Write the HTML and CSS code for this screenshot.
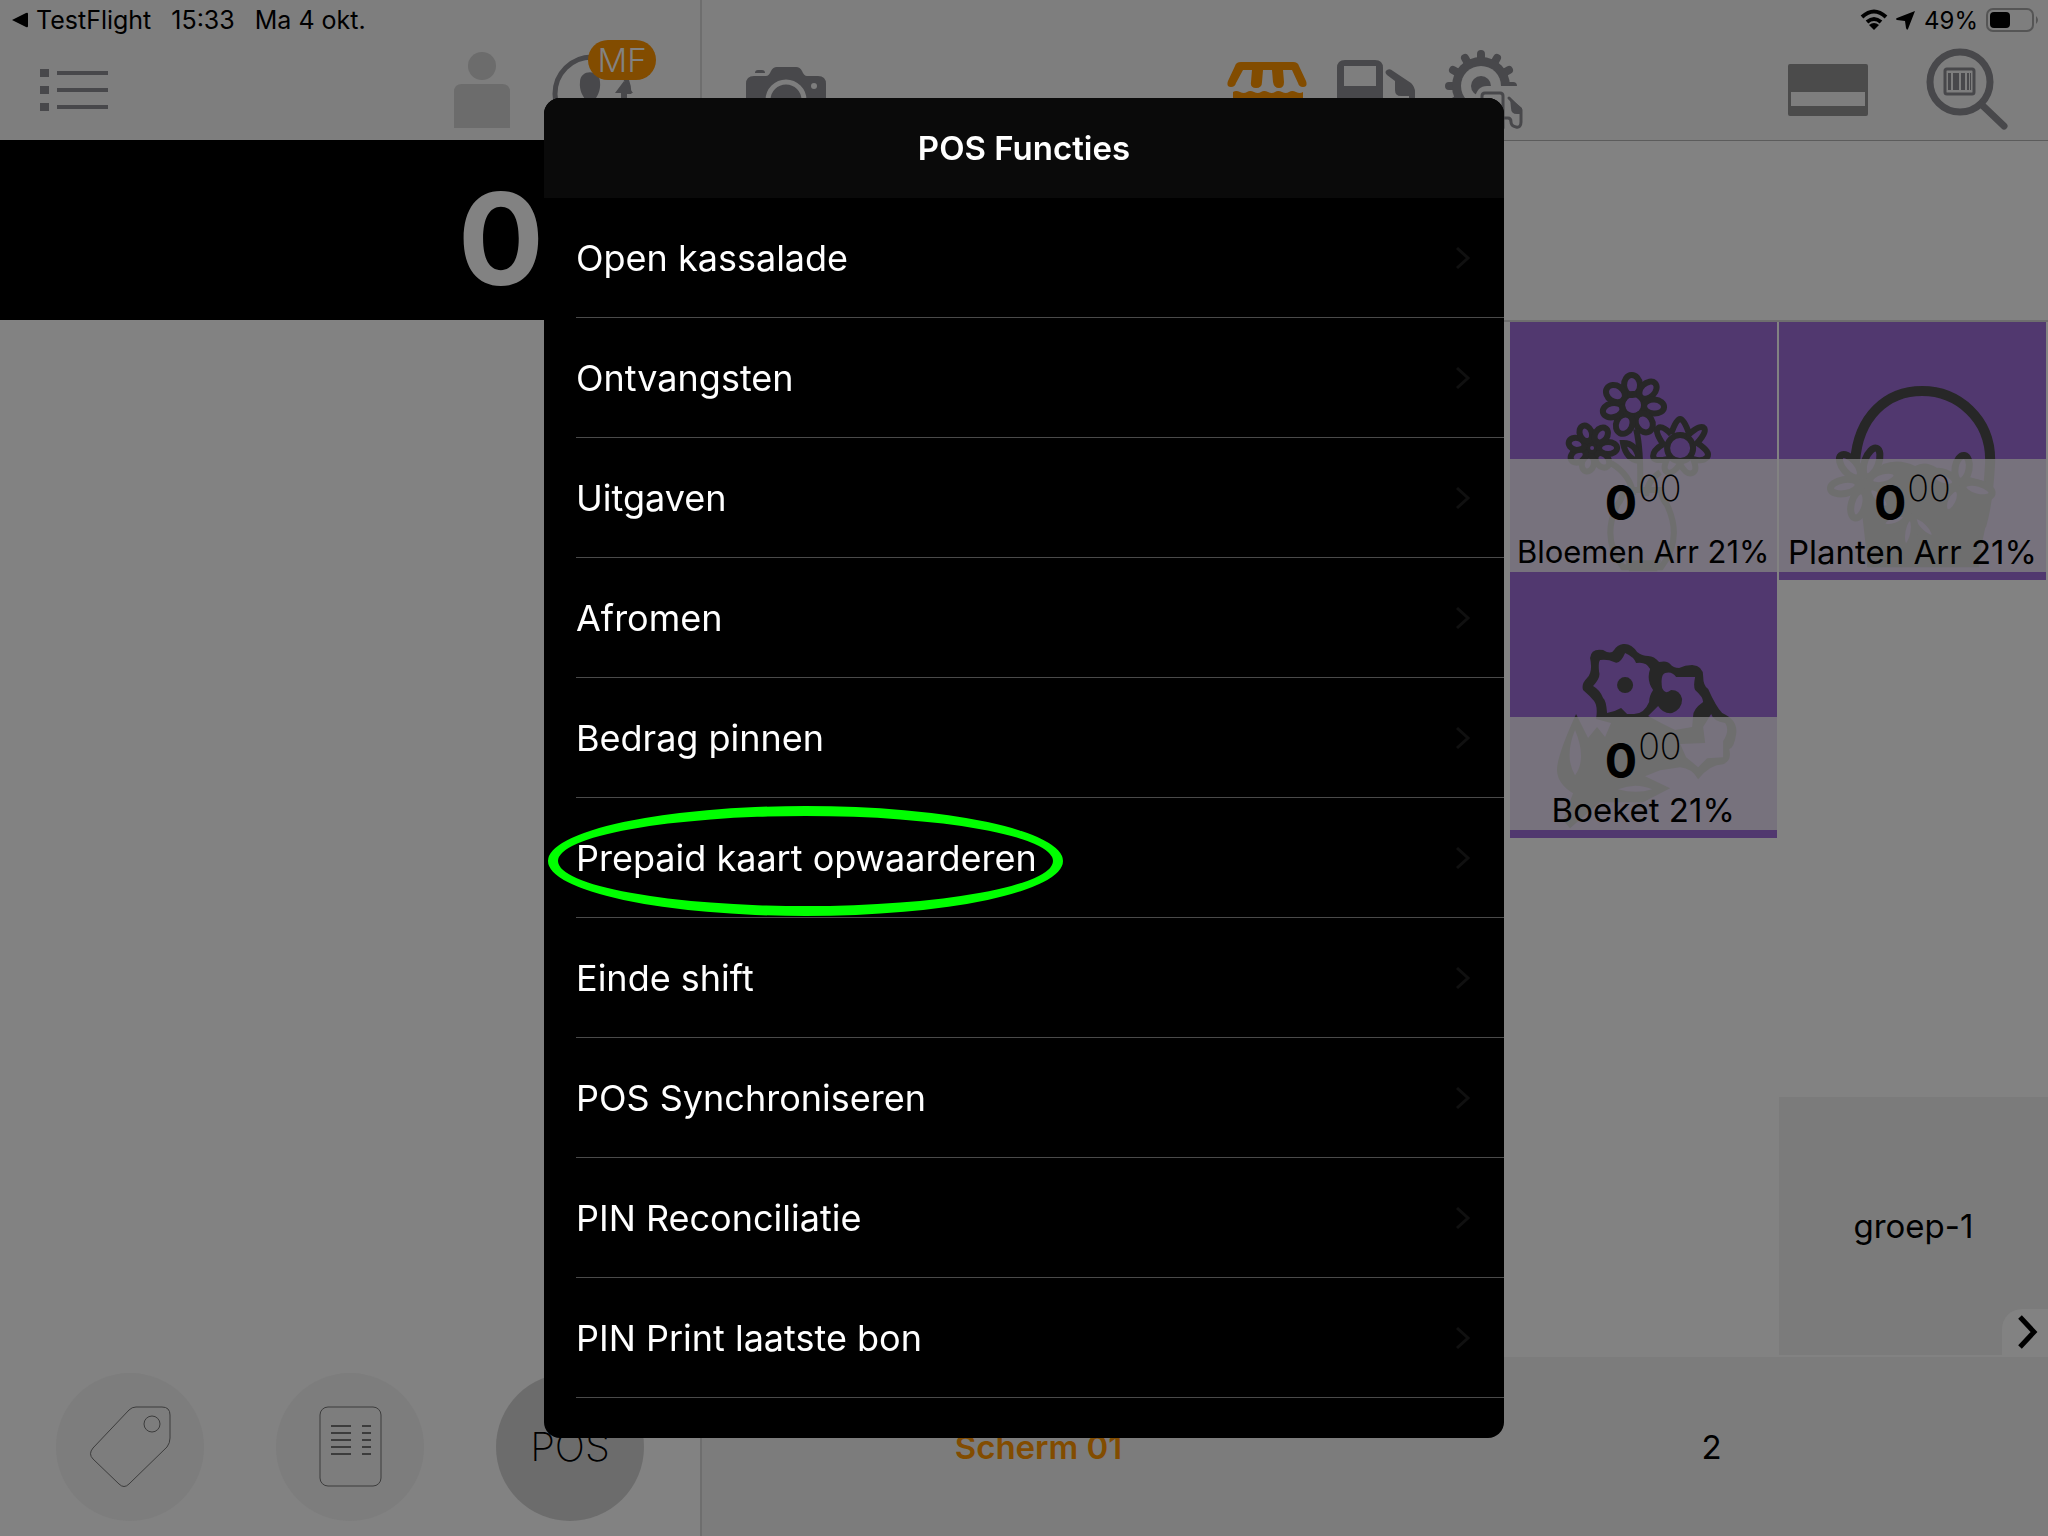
FILE: index.html
```html
<!DOCTYPE html>
<html lang="nl">

<head>
    <meta charset="UTF-8">
    <meta name="viewport" content="width=device-width, initial-scale=1.0">
    <title>POS Functies</title>

    <link rel="stylesheet" href="styles.css">
</head>

<body>

    <div class="app">

        <!-- Bon -->
        <section class="receipt">
            <header class="topbar">
                <div class="status">
                    <a class="back" href="#">
                        <svg width="16" height="16" viewBox="0 0 16 16"><path d="M0 8 14 1q2-1 2 1v12q0 2-2 1z"/></svg>
                        TestFlight
                    </a>
                    <span>15:33</span>
                    <span>Ma 4 okt.</span>
                </div>
                <div class="tools tools-left">
                    <button class="tool" aria-label="Menu">
                        <svg width="68" height="80" viewBox="0 0 68 80">
                            <path d="M0 19h9v8H0zM0 36h9v8H0zM0 53h9v8H0zM17 21h51v4H17zM17 38h51v4H17zM17 55h51v4H17z"/>
                        </svg>
                    </button>
                    <button class="tool customer" aria-label="Klant">
                        <svg width="56" height="80" viewBox="0 0 56 80">
                            <circle cx="28" cy="16" r="14"/>
                            <path d="M0 78V42q0-8 8-8h40q8 0 8 8v36z"/>
                        </svg>
                    </button>
                    <button class="tool user" aria-label="Gebruiker">
                        <svg width="80" height="80" viewBox="0 0 80 80">
                            <circle class="line" cx="40" cy="44" r="37"/>
                            <path d="M28 32c0-13 20-13 20 0 1 8-3 16-6 18h-8c-3-3-7-10-6-18z"/>
                            <path d="M72 31 81 43h-6v20h-6V43h-6z"/>
                            <path class="gap" d="M64 44h5v16h-5zM75 44h5v16h-5z"/>
                        </svg>
                        <span class="badge">MF</span>
                    </button>
                </div>
            </header>

            <div class="total">0</div>
            <div class="lines"></div>

            <footer class="actions">
                <button class="round" aria-label="Label">
                    <svg width="148" height="148" viewBox="0 0 148 148">
                        <path d="M80 34h26q8 0 8 8v23q0 5-3 9L73 111q-5 5-10 0L37 86q-5-5 0-11l36-38q3-3 7-3z"/>
                        <circle cx="96" cy="51" r="8"/>
                    </svg>
                </button>
                <button class="round" aria-label="Bonnen">
                    <svg width="148" height="148" viewBox="0 0 148 148">
                        <rect x="44" y="34" width="61" height="79" rx="8"/>
                        <path class="text-lines" d="M55 53h20M86 53h9M55 60h20M86 60h9M55 67h20M86 67h9M55 74h20M86 74h9M55 81h20M86 81h9"/>
                    </svg>
                </button>
                <button class="round active">POS</button>
            </footer>
        </section>

        <!-- Artikelen -->
        <section class="catalog">
            <header class="topbar">
                <div class="status status-right">
                    <svg width="28" height="22" viewBox="0 0 28 22">
                        <path class="wave" d="M2 8q12-11 24 0M7 13q7-6 14 0"/>
                        <path d="M14 21 9 16q5-4 10 0z"/>
                    </svg>
                    <svg width="20" height="20" viewBox="0 0 20 20"><path d="M19 1 12 19q-1 2-2-1l-1-7-8-1q-2-1 0-2z"/></svg>
                    <span>49%</span>
                    <svg class="battery" width="54" height="24" viewBox="0 0 54 24">
                        <rect class="shell" x="1" y="1" width="46" height="22" rx="6"/>
                        <rect x="4" y="4" width="20" height="16" rx="4"/>
                        <path class="cap" d="M50 8q4 4 0 8z"/>
                    </svg>
                </div>
                <div class="tools tools-right">
                    <div class="tool-group">
                        <button class="tool" aria-label="Camera">
                            <svg width="88" height="80" viewBox="0 0 88 80">
                                <path d="M12 26h12q3 0 5-5 2-4 6-4h19q4 0 6 4 2 5 5 5h11q8 0 8 8v38H4V34q0-8 8-8zM13 23q0-3 3-3h4q3 0 3 3z"/>
                                <circle class="lens" cx="44" cy="50" r="18"/>
                                <circle class="hole" cx="72" cy="36" r="3"/>
                            </svg>
                        </button>
                    </div>
                    <div class="tool-group">
                        <button class="tool selected" aria-label="Winkel">
                            <svg width="80" height="80" viewBox="0 0 80 80">
                                <path d="M14 12h52q5 0 6 4l7 15q2 6-3 6-4 0-5-4l-6-13h-9l1 12q0 6-5 6t-6-6l-1-12h-9l-1 12q0 6-6 6t-5-6l1-12h-9L9 33q-1 4-5 4-5 0-3-6l7-15q1-4 6-4z"/>
                                <path d="M6 42q3-2 7 0t7 0 7 0 7 0 7 0 7 0 7 0 7 0 7 0 7 0v30H6z"/>
                            </svg>
                        </button>
                        <button class="tool" aria-label="Tankstation">
                            <svg width="80" height="80" viewBox="0 0 80 80">
                                <path fill-rule="evenodd" d="M10 10h30q8 0 8 8v54H2V18q0-8 8-8zM9 16v20h32V16z"/>
                                <path d="M52 20q3-2 6 1l18 12q4 4 4 9v28h-6V46h-8q-6 0-6-6v-9l-8-6q-3-3 0-5z"/>
                            </svg>
                        </button>
                        <button class="tool" aria-label="Instellingen">
                            <svg width="80" height="80" viewBox="0 0 80 80">
                                <g transform="translate(38 36)">
                                    <path class="teeth" d="M-32 0H32M-28-16 28 16M-16-28 16 28M0-32V32M16-28-16 28M28-16-28 16"/>
                                    <circle r="29"/>
                                    <circle class="hole" r="20"/>
                                    <circle r="10"/>
                                    <path class="hole" d="M-6 12Q-4 0 6 0h36v44H-6z"/>
                                </g>
                                <path class="line thin" d="M39 78V46q0-3 3-3h15q3 0 3 3v32M60 68h5q3 0 3 4t5 5 5-5V60L66 48"/>
                                <path d="M67 48 79 58v6h-5q-6 0-6-6z"/>
                            </svg>
                        </button>
                    </div>
                    <div class="tool-group">
                        <button class="tool card" aria-label="Betaalkaart">
                            <svg width="80" height="80" viewBox="0 0 80 80">
                                <path fill-rule="evenodd" d="M2 14h76q2 0 2 2v48q0 2-2 2H2q-2 0-2-2V16q0-2 2-2zM3 42v14h74V42z"/>
                            </svg>
                        </button>
                        <button class="tool" aria-label="Artikel zoeken">
                            <svg width="88" height="80" viewBox="0 0 88 80">
                                <circle class="line wide" cx="40" cy="32" r="30"/>
                                <path class="line wide" d="M62 55 84 76"/>
                                <rect class="line thin" x="25" y="19" width="29" height="25" rx="2"/>
                                <path d="M28 23h3v17h-3zM33 23h6v17h-6zM41 23h4v17h-4zM47 23h2v17h-2zM50 23h1v17h-1z"/>
                            </svg>
                        </button>
                    </div>
                </div>
            </header>

            <div class="search-area"></div>

            <div class="grid">
                <button class="tile first">
                    <svg class="art" viewBox="0 0 267 258">
                        <g class="stroke">
                            <!-- bovenste bloem -->
                            <g transform="translate(123 83)">
                                <circle r="11"/>
                                <ellipse cx="20" rx="10" ry="8" transform="rotate(-93)"/>
                                <ellipse cx="21" rx="10" ry="7" transform="rotate(-45)"/>
                                <ellipse cx="21" rx="10" ry="7" transform="rotate(4)"/>
                                <ellipse cx="21" rx="10" ry="8" transform="rotate(58)"/>
                                <ellipse cx="21" rx="10" ry="8" transform="rotate(115)"/>
                                <ellipse cx="21" rx="10" ry="7" transform="rotate(166)"/>
                                <ellipse cx="21" rx="10" ry="8" transform="rotate(213)"/>
                            </g>
                            <!-- linker bloem -->
                            <g transform="translate(82 126)">
                                <circle r="5"/>
                                <ellipse cx="16" rx="9" ry="6" transform="rotate(0)"/>
                                <ellipse cx="16" rx="8" ry="6" transform="rotate(50)"/>
                                <ellipse cx="16" rx="8" ry="6" transform="rotate(105)"/>
                                <ellipse cx="16" rx="8" ry="6" transform="rotate(150)"/>
                                <ellipse cx="16" rx="8" ry="6" transform="rotate(195)"/>
                                <ellipse cx="16" rx="8" ry="6" transform="rotate(247)"/>
                                <ellipse cx="16" rx="8" ry="6" transform="rotate(305)"/>
                            </g>
                            <!-- rechter bloem -->
                            <g transform="translate(170 126)">
                                <circle r="13"/>
                                <path d="M-9-14Q-4-29 0-29T9-14Q21-24 24-20T17-5Q31 4 27 9T13 11Q18 23 12 25T0 16Q-8 27-13 24T-13 11Q-27 14-27 8T-17-4Q-26-17-22-20T-9-14"/>
                            </g>
                            <path d="M126 107q5 20 4 60M101 141q20 12 22 32M150 150q-14 10-14 24"/>
                            <path d="M113 121q14 0 16 18-13-2-16-18z"/>
                            <path d="M113 168h38q0 8 6 15 16 34-6 62h-38q-22-28-6-62 6-7 6-15z"/>
                        </g>
                        <path d="M115 238h36l-4 11h-28z"/>
                    </svg>
                    <span class="band">
                        <span class="price"><b>0</b><sup>00</sup></span>
                        <span class="name small">Bloemen Arr 21%</span>
                    </span>
                </button>

                <button class="tile">
                    <svg class="art" viewBox="0 0 267 258">
                        <path class="handle" d="M76 140C79 94 108 69 143 69S212 96 211 140Q209 180 202 204"/>
                        <!-- mand -->
                        <path d="M80 165 104 142Q120 136 136 144 146 138 158 146L208 160 213 172 200 235V245H88V235z"/>
                        <!-- bloemen -->
                        <g class="petals">
                            <g transform="translate(85 161)">
                                <ellipse cx="22" rx="15" ry="7" transform="rotate(-70)"/>
                                <ellipse cx="22" rx="14" ry="7" transform="rotate(-130)"/>
                                <ellipse cx="20" rx="14" ry="7" transform="rotate(170)"/>
                                <ellipse cx="22" rx="14" ry="7" transform="rotate(105)"/>
                                <ellipse cx="21" rx="14" ry="7" transform="rotate(45)"/>
                                <ellipse cx="20" rx="14" ry="7" transform="rotate(-15)"/>
                            </g>
                            <g transform="translate(180 163)">
                                <ellipse cx="17" rx="13" ry="7" transform="rotate(-80)"/>
                                <ellipse cx="19" rx="15" ry="7" transform="rotate(15)"/>
                                <ellipse cx="17" rx="13" ry="7" transform="rotate(115)"/>
                                <ellipse cx="17" rx="13" ry="7" transform="rotate(200)"/>
                            </g>
                            <g transform="translate(132 192)">
                                <ellipse cx="18" rx="15" ry="6" transform="rotate(45)"/>
                                <ellipse cx="18" rx="15" ry="6" transform="rotate(100)"/>
                                <ellipse cx="18" rx="13" ry="6" transform="rotate(160)"/>
                            </g>
                        </g>
                        <circle cx="85" cy="161" r="5"/>
                    </svg>
                    <span class="band">
                        <span class="price"><b>0</b><sup>00</sup></span>
                        <span class="name">Planten Arr 21%</span>
                    </span>
                </button>

                <button class="tile first">
                    <svg class="art" viewBox="0 0 267 258">
                        <path fill-rule="evenodd" d="M113 64Q121 63 127 72 132 76 138 76T149 82Q157 80 160 84T169 88Q175 85 182 85 193 86 193 96T198 109Q206 127 212 133 228 140 226 154T219 169Q222 181 213 184 200 184 188 199 182 188 170 187L150 190 135 196 160 208 133 222H90L60 248 53 240 63 213Q48 204 47 191T66 134L78 158 87 147 95 157 101 143 86 139Q88 126 84 121T73 110Q71 104 77 98T80 78Q81 68 93 70 101 75 104 70T113 64z
                            M115 73Q124 77 126 83 136 81 140 89 136 100 143 110 139 116 139 122 134 134 124 134L117 134 111 128Q104 132 97 133 96 120 93 118 90 110 83 106 91 97 89 92 88 82 90 80 98 79 104 82T115 73z
                            M152 108Q150 95 155 93 162 91 166 97L185 97Q183 106 185 110 193 117 193 122 183 129 183 136L182 147 165 150 151 143 138 136 148 126Q153 134 162 133 172 129 172 119 170 110 161 110 155 115 152 108z
                            M201 134 Q203 141 215 143 220 150 213 161L213 177 197 178 188 187 176 177 170 164 195 163 193 147z
                            M65 150Q54 177 65 195 77 179 65 150zM108 209Q126 202 142 209 126 214 108 209z"/>
                        <circle cx="115" cy="105" r="8"/>
                    </svg>
                    <span class="band">
                        <span class="price"><b>0</b><sup>00</sup></span>
                        <span class="name">Boeket 21%</span>
                    </span>
                </button>

                <button class="group">groep-1</button>

                <button class="next" aria-label="Volgende">
                    <svg width="20" height="36" viewBox="0 0 20 36"><path d="M2 2 16 17 2 32"/></svg>
                </button>
            </div>

            <nav class="screens">
                <a class="current" href="#">Scherm 01</a>
                <a href="#">2</a>
            </nav>
        </section>

    </div>

    <div class="overlay">
        <div class="modal" role="dialog" aria-labelledby="modal-title">
            <h1 id="modal-title">POS Functies</h1>
            <ul id="functies">
                <li><button>Open kassalade</button></li>
                <li><button>Ontvangsten</button></li>
                <li><button>Uitgaven</button></li>
                <li><button>Afromen</button></li>
                <li><button>Bedrag pinnen</button></li>
                <li class="marked"><button>Prepaid kaart opwaarderen</button></li>
                <li><button>Einde shift</button></li>
                <li><button>POS Synchroniseren</button></li>
                <li><button>PIN Reconciliatie</button></li>
                <li><button>PIN Print laatste bon</button></li>
            </ul>
        </div>
    </div>

    <script>
        'use strict'

        // Pijltje aan het einde van elke regel
        const pijl = '<svg class="chevron" width="14" height="24" viewBox="0 0 14 24"><path d="M1 2 12 12 1 22"/></svg>'

        for(let knop of document.querySelectorAll('#functies button')) {
            knop.insertAdjacentHTML('beforeend', pijl)
        }
    </script>

</body>

</html>
```
FILE: styles.css
```css
*,
*::before {
    box-sizing: border-box;
}

html,
body {
    height: 100%;
    margin: 0;
    overflow: hidden;
}

body {
    font-family: Inter, 'Liberation Sans', Arial, sans-serif;
    font-size: 33px;
    color: #000;
    background: #828282;
}

button {
    font: inherit;
    color: inherit;
    background: none;
    border: 0;
    padding: 0;
}

a {
    color: inherit;
    text-decoration: none;
}

svg {
    display: block;
    overflow: visible;
}

.app {
    display: grid;
    grid-template-columns: minmax(0, 702fr) minmax(0, 1346fr);
    height: 100%;
}

.receipt,
.catalog {
    display: flex;
    flex-direction: column;
}

.receipt {
    border-right: 2px solid #6e6e6e;
}

/* bovenbalk */
.topbar {
    flex: none;
    height: 140px;
    background: #7e7e7e;
}

.status {
    display: flex;
    align-items: center;
    gap: 20px;
    height: 40px;
    padding: 0 12px;
    font-size: 25px;
}

.status-right {
    justify-content: flex-end;
    gap: 8px;
    padding: 0 8px;
    font-size: 24px;
}

.back {
    display: flex;
    align-items: center;
    gap: 8px;
}

.wave {
    fill: none;
    stroke: #000;
    stroke-width: 4;
}

.shell {
    fill: none;
    stroke: #555;
    stroke-width: 2;
}

.cap {
    fill: #555;
}

.tools {
    height: 100px;
    padding: 0 40px;
}

.tools-left {
    display: flex;
    align-items: center;
    gap: 42px;
    padding-right: 68px;
}

.tools-right {
    display: grid;
    grid-template-columns: 1fr auto 1fr;
    align-items: center;
}

.tool-group {
    display: flex;
    gap: 28px;
}

.tool-group:last-child {
    justify-content: flex-end;
    gap: 52px;
}

.tool {
    position: relative;
    fill: #48484b;
    stroke: none;
}

.customer {
    margin-left: auto;
    fill: #6c6c6c;
}

.card {
    fill: #4b4b4b;
}

.selected {
    fill: #824c00;
}

.line {
    fill: none;
    stroke: #48484b;
    stroke-width: 5;
    stroke-linecap: round;
}

.wide {
    stroke-width: 7;
}

.thin {
    stroke-width: 3;
}

.teeth {
    stroke: #48484b;
    stroke-width: 8;
    stroke-linecap: round;
}

.hole,
.gap {
    fill: #7e7e7e;
}

.lens {
    stroke: #7e7e7e;
    stroke-width: 5;
}

.badge {
    position: absolute;
    top: -10px;
    right: -24px;
    width: 68px;
    height: 40px;
    border-radius: 20px;
    font-size: 33px;
    font-weight: 300;
    line-height: 40px;
    text-align: center;
    color: #828282;
    background: #824c00;
}

/* bon */
.total {
    flex: none;
    height: 180px;
    padding-right: 156px;
    font-size: 128px;
    font-weight: 700;
    line-height: 198px;
    text-align: right;
    color: #828282;
    background: #000;
}

.lines {
    flex: 1;
}

.actions {
    display: flex;
    justify-content: space-between;
    padding: 16px 56px;
}

.round {
    width: 148px;
    height: 148px;
    border-radius: 50%;
    font-size: 40px;
    font-weight: 200;
    background: #7d7d7d;
}

.round svg {
    fill: none;
    stroke: #3c3c3c;
    stroke-width: 1;
}

.round .text-lines {
    stroke-width: 2;
}

.active {
    background: #6c6c6c;
}

/* artikelen */
.search-area {
    flex: none;
    height: 182px;
    border-top: 1px solid #5c5c5c;
    border-bottom: 2px solid #6e6e6e;
}

.grid {
    position: relative;
    flex: 1;
    display: grid;
    grid-template-columns: repeat(5, 1fr);
    grid-template-rows: repeat(4, 1fr);
    column-gap: 2px;
    padding: 0 2px 2px 0;
}

.tile {
    display: grid;
    background: #51386f;
}

.first {
    grid-column: 4;
}

/* tekening en prijsband liggen in dezelfde cel */
.art,
.band {
    grid-area: 1 / 1;
    width: 100%;
}

.art {
    fill: #272727;
}

.stroke {
    fill: none;
    stroke: #272727;
    stroke-width: 6;
}

.handle {
    fill: none;
    stroke: #272727;
    stroke-width: 10;
}

.petals {
    fill: #51386f;
    stroke: #272727;
    stroke-width: 7;
}

.band {
    align-self: end;
    display: flex;
    flex-direction: column;
    align-items: center;
    height: 113px;
    margin-bottom: 8px;
    padding-top: 12px;
    background: rgba(129, 129, 129, 0.79);
}

.price {
    display: flex;
    gap: 1px;
    height: 60px;
    font-size: 48px;
    line-height: 64px;
}

.price sup {
    font-size: 36px;
    font-weight: 200;
    line-height: 34px;
}

.name {
    line-height: 42px;
    white-space: nowrap;
}

.small {
    font-size: 31px;
}

.group {
    grid-area: 4 / 5;
    margin-right: -2px;
    background: #7b7b7b;
}

.next {
    position: absolute;
    right: 0;
    bottom: 0;
    width: 46px;
    height: 48px;
    padding: 0 0 0 16px;
    border-top-left-radius: 20px;
    background: #828282;
}

.next path {
    fill: none;
    stroke: #000;
    stroke-width: 5;
}

.screens {
    flex: none;
    display: grid;
    grid-template-columns: 1fr 1fr;
    place-items: center;
    height: 180px;
    background: #7c7c7c;
}

.current {
    font-weight: 600;
    color: #824c00;
}

/* venster met functies */
.overlay {
    position: fixed;
    inset: 0;
    display: flex;
    align-items: center;
    justify-content: center;
}

.modal {
    width: 960px;
    max-width: 100%;
    padding-bottom: 40px;
    border-radius: 16px;
    overflow: hidden;
    background: #000;
    color: #fff;
}

.modal h1 {
    margin: 0;
    font-size: 33px;
    font-weight: 600;
    line-height: 100px;
    text-align: center;
    background: #0a0a0a;
}

.modal ul {
    margin: 0 0 0 32px;
    padding: 0;
    list-style: none;
}

.modal li {
    position: relative;
    border-bottom: 1px solid #4a4a4a;
}

.modal li button {
    display: flex;
    align-items: center;
    justify-content: space-between;
    width: 100%;
    height: 119px;
    padding-right: 34px;
    font-size: 36px;
}

.chevron {
    fill: none;
    stroke: #101010;
    stroke-width: 3;
}

/* groene cirkel om de gekozen functie */
.marked::before {
    content: '';
    position: absolute;
    top: 8px;
    left: -28px;
    width: 515px;
    height: 110px;
    border: 10px solid #0f0;
    border-radius: 50%;
}

.marked button {
    position: relative;
}
```
